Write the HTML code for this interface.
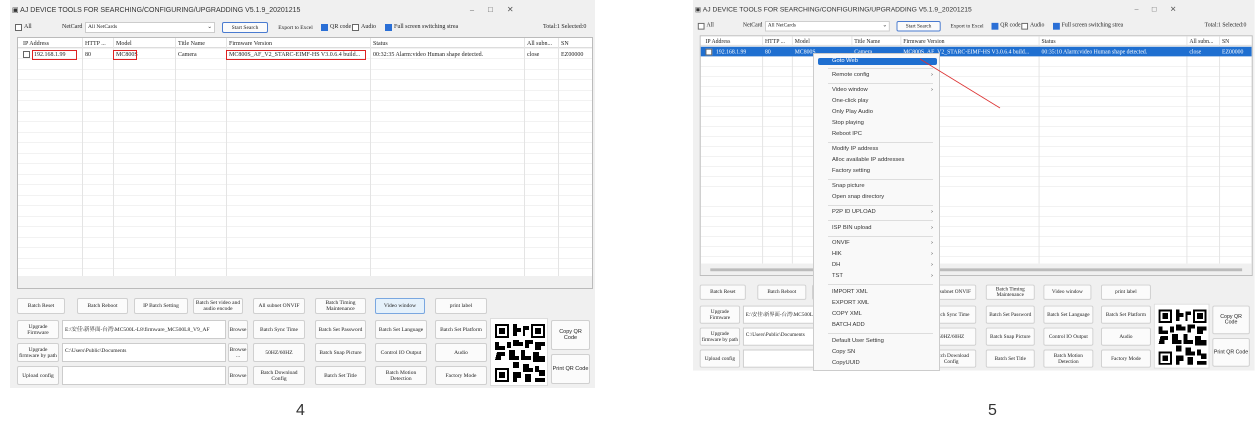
<!DOCTYPE html>
<html><head><meta charset="utf-8"><style>
*{margin:0;padding:0;box-sizing:border-box}
body{width:1260px;height:426px;background:#fff;position:relative;overflow:hidden;font-family:"Liberation Serif","Noto Serif CJK SC",serif;font-size:6px;color:#222}
.win{position:absolute;width:585px;height:388px;background:#f0f0f0;transform-origin:0 0}
.a{position:absolute;white-space:nowrap}
.title{font-family:"Liberation Sans",sans-serif;font-size:7px;color:#333}
.cb{position:absolute;width:7px;height:7px;border:1px solid #666;background:#fff}
.cbc{background:#2a6fd6;border-color:#2a6fd6}
.btn{position:absolute;background:#fbfbfb;border:1px solid #d0d0d0;border-radius:2px;display:flex;align-items:center;justify-content:center;text-align:center;line-height:6px;font-size:5.5px}
.inp{position:absolute;background:#fff;border:1px solid #ccc;font-size:5.5px;padding:4px 2px}
.table{position:absolute;left:7px;top:37px;width:576px;height:252px;background:#fff;border:1px solid #bbb;overflow:hidden;
background-image:repeating-linear-gradient(#fff 0 10px,#e4e4e4 10px 10.5px)}
.col{position:absolute;top:0;bottom:12px;width:1px;background:#e4e4e4}
.red{position:absolute;border:1.5px solid #d22}
.menu{position:absolute;left:813px;top:53px;width:127px;height:318px;background:#f9f9f9;border:1px solid #ccc;font-family:"Liberation Sans",sans-serif;font-size:5.8px;color:#333}
.mi{position:absolute;left:18px}
.ar{position:absolute;left:117px}
.sep{position:absolute;left:14px;right:6px;height:1px;background:#ddd}
</style></head><body>

<!-- LEFT WINDOW -->
<div class="win" style="left:10px;top:0">
 <div class="a title" style="left:2px;top:6px">▣ AJ DEVICE TOOLS FOR SEARCHING/CONFIGURING/UPGRADDING V5.1.9_20201215</div>
 <div class="a" style="left:460px;top:5px;font-size:8px;color:#555">–&nbsp;&nbsp;&nbsp;&nbsp;&nbsp;&nbsp;&nbsp;□&nbsp;&nbsp;&nbsp;&nbsp;&nbsp;&nbsp;&nbsp;✕</div>
 <div class="cb" style="left:5px;top:24px"></div><div class="a" style="left:14px;top:24px">All</div>
 <div class="a" style="left:52px;top:24px">NetCard</div>
 <div class="inp" style="left:75px;top:22px;width:130px;height:11px;padding:1px 2px">All NetCards<span style="float:right">⌄</span></div>
 <div class="btn" style="left:212px;top:22px;width:46px;height:11px;border-color:#4a7bd0">Start Search</div>
 <div class="btn" style="left:263px;top:22px;width:45px;height:11px;border:none;background:none">Export to Excel</div>
 <div class="cb cbc" style="left:311px;top:24px"></div><div class="a" style="left:320px;top:24px">QR code</div>
 <div class="cb" style="left:342px;top:24px"></div><div class="a" style="left:351px;top:24px">Audio</div>
 <div class="cb cbc" style="left:375px;top:24px"></div><div class="a" style="left:384px;top:24px">Full screen switching strea</div>
 <div class="a" style="left:533px;top:24px">Total:1 Selected:0</div>
 <div class="table">
  <div style="position:absolute;left:0;right:0;top:0;height:10px;background:#fff;border-bottom:1px solid #ddd"></div>
  <div class="col" style="left:64px"></div><div class="col" style="left:95px"></div><div class="col" style="left:157px"></div><div class="col" style="left:208px"></div><div class="col" style="left:352px"></div><div class="col" style="left:506px"></div><div class="col" style="left:540px"></div>
  <div class="a" style="left:5px;top:3px">IP Address</div><div class="a" style="left:67px;top:3px">HTTP ...</div><div class="a" style="left:98px;top:3px">Model</div><div class="a" style="left:160px;top:3px">Title Name</div><div class="a" style="left:211px;top:3px">Firmware Version</div><div class="a" style="left:355px;top:3px">Status</div><div class="a" style="left:509px;top:3px">All subn...</div><div class="a" style="left:543px;top:3px">SN</div>
  <div class="cb" style="left:5px;top:13px"></div>
  <div class="a" style="left:16px;top:14px">192.168.1.99</div><div class="a" style="left:67px;top:14px">80</div><div class="a" style="left:98px;top:14px">MC800S</div><div class="a" style="left:160px;top:14px">Camera</div><div class="a" style="left:211px;top:14px">MC800S_AF_V2_STARC-EIMF-HS V3.0.6.4 build...</div><div class="a" style="left:355px;top:14px">00:32:35 Alarm:video Human shape detected.</div><div class="a" style="left:509px;top:14px">close</div><div class="a" style="left:543px;top:14px">EZ00000</div>
  <div class="red" style="left:14px;top:12px;width:45px;height:10px"></div>
  <div class="red" style="left:95px;top:12px;width:24px;height:10px"></div>
  <div class="red" style="left:208px;top:12px;width:140px;height:10px"></div>
  <div style="position:absolute;left:0;right:0;bottom:0;height:12px;background:#f0f0f0"></div>
 </div>
 <div class="btn" style="left:7px;top:298px;width:48px;height:16px">Batch Reset</div>
 <div class="btn" style="left:67px;top:298px;width:51px;height:16px">Batch Reboot</div>
 <div class="btn" style="left:124px;top:298px;width:54px;height:16px">IP Batch Setting</div>
 <div class="btn" style="left:183px;top:298px;width:50px;height:16px">Batch Set video and audio encode</div>
 <div class="btn" style="left:243px;top:298px;width:52px;height:16px">All subnet ONVIF</div>
 <div class="btn" style="left:305px;top:298px;width:51px;height:16px">Batch Timing Maintenance</div>
 <div class="btn" style="left:365px;top:298px;width:50px;height:16px;background:#e5f1fb;border-color:#7aa7e0">Video window</div>
 <div class="btn" style="left:425px;top:298px;width:52px;height:16px">print label</div>

 <div class="btn" style="left:7px;top:320px;width:42px;height:19px">Upgrade Firmware</div>
 <div class="inp" style="left:52px;top:320px;width:164px;height:19px;white-space:nowrap;overflow:hidden">E:\安佳\新界面-台湾\MC500L-L8\firmware_MC500L8_V9_AF</div>
 <div class="btn" style="left:218px;top:320px;width:20px;height:19px">Browse</div>
 <div class="btn" style="left:243px;top:320px;width:52px;height:19px">Batch Sync Time</div>
 <div class="btn" style="left:305px;top:320px;width:51px;height:19px">Batch Set Password</div>
 <div class="btn" style="left:365px;top:320px;width:52px;height:19px">Batch Set Language</div>
 <div class="btn" style="left:425px;top:320px;width:52px;height:19px">Batch Set Platform</div>

 <div class="btn" style="left:7px;top:343px;width:42px;height:19px">Upgrade firmware by path</div>
 <div class="inp" style="left:52px;top:343px;width:164px;height:19px">C:\Users\Public\Documents</div>
 <div class="btn" style="left:218px;top:343px;width:20px;height:19px">Browse ...</div>
 <div class="btn" style="left:243px;top:343px;width:52px;height:19px">50HZ/60HZ</div>
 <div class="btn" style="left:305px;top:343px;width:51px;height:19px">Batch Snap Picture</div>
 <div class="btn" style="left:365px;top:343px;width:52px;height:19px">Control IO Output</div>
 <div class="btn" style="left:425px;top:343px;width:52px;height:19px">Audio</div>

 <div class="btn" style="left:7px;top:366px;width:42px;height:19px">Upload config</div>
 <div class="inp" style="left:52px;top:366px;width:164px;height:19px"></div>
 <div class="btn" style="left:218px;top:366px;width:20px;height:19px">Browse</div>
 <div class="btn" style="left:243px;top:366px;width:52px;height:19px">Batch Download Config</div>
 <div class="btn" style="left:305px;top:366px;width:51px;height:19px">Batch Set Title</div>
 <div class="btn" style="left:365px;top:366px;width:52px;height:19px">Batch Motion Detection</div>
 <div class="btn" style="left:425px;top:366px;width:52px;height:19px">Factory Mode</div>

 <div style="position:absolute;left:480px;top:318px;width:58px;height:68px;background:#fff;border:1px solid #ddd">
  <svg width="50" height="58" viewBox="0 0 25 29" style="position:absolute;left:4px;top:5px" shape-rendering="crispEdges">
   <rect x="0" y="0" width="7" height="7" fill="#000"/><rect x="1" y="1" width="5" height="5" fill="#fff"/><rect x="2" y="2" width="3" height="3" fill="#000"/>
   <rect x="18" y="0" width="7" height="7" fill="#000"/><rect x="19" y="1" width="5" height="5" fill="#fff"/><rect x="20" y="2" width="3" height="3" fill="#000"/>
   <rect x="0" y="22" width="7" height="7" fill="#000"/><rect x="1" y="23" width="5" height="5" fill="#fff"/><rect x="2" y="24" width="3" height="3" fill="#000"/>
   <path d="M9 0h2v2h2v2h-2v2h-2zM14 1h3v2h-2v3h-1zM9 8h3v1h2v2h-5zM0 9h2v2h3v2h-5zM6 9h2v3h-2zM15 8h4v2h-2v2h-2zM20 9h5v2h-2v2h-3zM1 14h4v2h-2v2h-3zM7 13h3v3h2v2h-5zM13 13h2v3h3v2h-5zM19 14h3v2h3v3h-6zM9 19h3v3h-3zM14 20h3v2h2v2h-5zM20 21h2v2h3v3h-3v-2h-2zM9 24h4v3h-2v2h-2zM15 25h3v4h-3zM20 27h5v2h-5z" fill="#000"/>
  </svg>
 </div>
 <div class="btn" style="left:541px;top:320px;width:39px;height:30px;font-family:'Liberation Sans',sans-serif">Copy QR Code</div>
 <div class="btn" style="left:541px;top:354px;width:39px;height:30px;font-family:'Liberation Sans',sans-serif">Print QR Code</div>
</div>

<!-- RIGHT WINDOW -->
<div class="win" style="left:693px;top:0;transform:scale(0.96,0.955)">
 <div class="a title" style="left:2px;top:6px">▣ AJ DEVICE TOOLS FOR SEARCHING/CONFIGURING/UPGRADDING V5.1.9_20201215</div>
 <div class="a" style="left:460px;top:5px;font-size:8px;color:#555">–&nbsp;&nbsp;&nbsp;&nbsp;&nbsp;&nbsp;&nbsp;□&nbsp;&nbsp;&nbsp;&nbsp;&nbsp;&nbsp;&nbsp;✕</div>
 <div class="cb" style="left:5px;top:24px"></div><div class="a" style="left:14px;top:24px">All</div>
 <div class="a" style="left:52px;top:24px">NetCard</div>
 <div class="inp" style="left:75px;top:22px;width:130px;height:11px;padding:1px 2px">All NetCards<span style="float:right">⌄</span></div>
 <div class="btn" style="left:212px;top:22px;width:46px;height:11px;border-color:#4a7bd0">Start Search</div>
 <div class="btn" style="left:263px;top:22px;width:45px;height:11px;border:none;background:none">Export to Excel</div>
 <div class="cb cbc" style="left:311px;top:24px"></div><div class="a" style="left:320px;top:24px">QR code</div>
 <div class="cb" style="left:342px;top:24px"></div><div class="a" style="left:351px;top:24px">Audio</div>
 <div class="cb cbc" style="left:375px;top:24px"></div><div class="a" style="left:384px;top:24px">Full screen switching strea</div>
 <div class="a" style="left:533px;top:24px">Total:1 Selected:0</div>
 <div class="table">
  <div style="position:absolute;left:0;right:0;top:0;height:10px;background:#fff;border-bottom:1px solid #ddd"></div>
  <div class="col" style="left:64px"></div><div class="col" style="left:95px"></div><div class="col" style="left:157px"></div><div class="col" style="left:208px"></div><div class="col" style="left:352px"></div><div class="col" style="left:506px"></div><div class="col" style="left:540px"></div>
  <div class="a" style="left:5px;top:3px">IP Address</div><div class="a" style="left:67px;top:3px">HTTP ...</div><div class="a" style="left:98px;top:3px">Model</div><div class="a" style="left:160px;top:3px">Title Name</div><div class="a" style="left:211px;top:3px">Firmware Version</div><div class="a" style="left:355px;top:3px">Status</div><div class="a" style="left:509px;top:3px">All subn...</div><div class="a" style="left:543px;top:3px">SN</div>
  <div style="position:absolute;left:0;right:0;top:11px;height:10px;background:#1f6fd0"></div>
  <div class="cb" style="left:5px;top:13px"></div>
  <div style="color:#fff">
  <div class="a" style="left:16px;top:14px">192.168.1.99</div><div class="a" style="left:67px;top:14px">80</div><div class="a" style="left:98px;top:14px">MC800S</div><div class="a" style="left:160px;top:14px">Camera</div><div class="a" style="left:211px;top:14px">MC800S_AF_V2_STARC-EIMF-HS V3.0.6.4 build...</div><div class="a" style="left:355px;top:14px">00:35:10 Alarm:video Human shape detected.</div><div class="a" style="left:509px;top:14px">close</div><div class="a" style="left:543px;top:14px">EZ00000</div>
  </div>
  <div style="position:absolute;left:0;right:0;bottom:0;height:12px;background:#f0f0f0"></div>
  <div style="position:absolute;left:10px;right:10px;bottom:4px;height:3px;background:#bbb"></div>
 </div>
 <div class="btn" style="left:7px;top:298px;width:48px;height:16px">Batch Reset</div>
 <div class="btn" style="left:67px;top:298px;width:51px;height:16px">Batch Reboot</div>
 <div class="btn" style="left:124px;top:298px;width:54px;height:16px">IP Batch Setting</div>
 <div class="btn" style="left:183px;top:298px;width:50px;height:16px">Batch Set video</div>
 <div class="btn" style="left:243px;top:298px;width:52px;height:16px">All subnet ONVIF</div>
 <div class="btn" style="left:305px;top:298px;width:51px;height:16px">Batch Timing Maintenance</div>
 <div class="btn" style="left:365px;top:298px;width:50px;height:16px">Video window</div>
 <div class="btn" style="left:425px;top:298px;width:52px;height:16px">print label</div>
 <div class="btn" style="left:7px;top:320px;width:42px;height:19px">Upgrade Firmware</div>
 <div class="inp" style="left:52px;top:320px;width:164px;height:19px;white-space:nowrap;overflow:hidden">E:\安佳\新界面-台湾\MC500L-L8\firmware</div>
 <div class="btn" style="left:218px;top:320px;width:20px;height:19px">Browse</div>
 <div class="btn" style="left:243px;top:320px;width:52px;height:19px">Batch Sync Time</div>
 <div class="btn" style="left:305px;top:320px;width:51px;height:19px">Batch Set Password</div>
 <div class="btn" style="left:365px;top:320px;width:52px;height:19px">Batch Set Language</div>
 <div class="btn" style="left:425px;top:320px;width:52px;height:19px">Batch Set Platform</div>
 <div class="btn" style="left:7px;top:343px;width:42px;height:19px">Upgrade firmware by path</div>
 <div class="inp" style="left:52px;top:343px;width:164px;height:19px">C:\Users\Public\Documents</div>
 <div class="btn" style="left:218px;top:343px;width:20px;height:19px">Browse</div>
 <div class="btn" style="left:243px;top:343px;width:52px;height:19px">50HZ/60HZ</div>
 <div class="btn" style="left:305px;top:343px;width:51px;height:19px">Batch Snap Picture</div>
 <div class="btn" style="left:365px;top:343px;width:52px;height:19px">Control IO Output</div>
 <div class="btn" style="left:425px;top:343px;width:52px;height:19px">Audio</div>
 <div class="btn" style="left:7px;top:366px;width:42px;height:19px">Upload config</div>
 <div class="inp" style="left:52px;top:366px;width:164px;height:19px"></div>
 <div class="btn" style="left:218px;top:366px;width:20px;height:19px">Browse</div>
 <div class="btn" style="left:243px;top:366px;width:52px;height:19px">Batch Download Config</div>
 <div class="btn" style="left:305px;top:366px;width:51px;height:19px">Batch Set Title</div>
 <div class="btn" style="left:365px;top:366px;width:52px;height:19px">Batch Motion Detection</div>
 <div class="btn" style="left:425px;top:366px;width:52px;height:19px">Factory Mode</div>
 <div style="position:absolute;left:480px;top:318px;width:58px;height:68px;background:#fff;border:1px solid #ddd">
  <svg width="50" height="58" viewBox="0 0 25 29" style="position:absolute;left:4px;top:5px" shape-rendering="crispEdges">
   <rect x="0" y="0" width="7" height="7" fill="#000"/><rect x="1" y="1" width="5" height="5" fill="#fff"/><rect x="2" y="2" width="3" height="3" fill="#000"/>
   <rect x="18" y="0" width="7" height="7" fill="#000"/><rect x="19" y="1" width="5" height="5" fill="#fff"/><rect x="20" y="2" width="3" height="3" fill="#000"/>
   <rect x="0" y="22" width="7" height="7" fill="#000"/><rect x="1" y="23" width="5" height="5" fill="#fff"/><rect x="2" y="24" width="3" height="3" fill="#000"/>
   <path d="M9 0h2v2h2v2h-2v2h-2zM14 1h3v2h-2v3h-1zM9 8h3v1h2v2h-5zM0 9h2v2h3v2h-5zM6 9h2v3h-2zM15 8h4v2h-2v2h-2zM20 9h5v2h-2v2h-3zM1 14h4v2h-2v2h-3zM7 13h3v3h2v2h-5zM13 13h2v3h3v2h-5zM19 14h3v2h3v3h-6zM9 19h3v3h-3zM14 20h3v2h2v2h-5zM20 21h2v2h3v3h-3v-2h-2zM9 24h4v3h-2v2h-2zM15 25h3v4h-3zM20 27h5v2h-5z" fill="#000"/>
  </svg>
 </div>
 <div class="btn" style="left:541px;top:320px;width:39px;height:30px;font-family:'Liberation Sans',sans-serif">Copy QR Code</div>
 <div class="btn" style="left:541px;top:354px;width:39px;height:30px;font-family:'Liberation Sans',sans-serif">Print QR Code</div>
</div>

<!-- context menu -->
<div class="menu">
 <div style="position:absolute;left:4px;top:4px;width:119px;height:7px;background:#1f6fd0;border-radius:2px"></div>
 <div class="mi" style="top:4px;color:#fff">Goto Web</div>
 <div class="sep" style="top:14px"></div>
 <div class="mi" style="top:18px">Remote config</div><div class="ar" style="top:18px">›</div>
 <div class="sep" style="top:29px"></div>
 <div class="mi" style="top:33px">Video window</div><div class="ar" style="top:33px">›</div>
 <div class="mi" style="top:44px">One-click play</div>
 <div class="mi" style="top:55px">Only Play Audio</div>
 <div class="mi" style="top:66px">Stop playing</div>
 <div class="mi" style="top:77px">Reboot IPC</div>
 <div class="sep" style="top:88px"></div>
 <div class="mi" style="top:92px">Modify IP address</div>
 <div class="mi" style="top:103px">Alloc available IP addresses</div>
 <div class="mi" style="top:114px">Factory setting</div>
 <div class="sep" style="top:125px"></div>
 <div class="mi" style="top:129px">Snap picture</div>
 <div class="mi" style="top:140px">Open snap directory</div>
 <div class="sep" style="top:151px"></div>
 <div class="mi" style="top:155px">P2P ID UPLOAD</div><div class="ar" style="top:155px">›</div>
 <div class="sep" style="top:166px"></div>
 <div class="mi" style="top:171px">ISP BIN upload</div><div class="ar" style="top:171px">›</div>
 <div class="sep" style="top:182px"></div>
 <div class="mi" style="top:186px">ONVIF</div><div class="ar" style="top:186px">›</div>
 <div class="mi" style="top:197px">HIK</div><div class="ar" style="top:197px">›</div>
 <div class="mi" style="top:208px">DH</div><div class="ar" style="top:208px">›</div>
 <div class="mi" style="top:219px">TST</div><div class="ar" style="top:219px">›</div>
 <div class="sep" style="top:230px"></div>
 <div class="mi" style="top:235px">IMPORT XML</div>
 <div class="mi" style="top:246px">EXPORT XML</div>
 <div class="mi" style="top:257px">COPY XML</div>
 <div class="mi" style="top:268px">BATCH ADD</div>
 <div class="sep" style="top:279px"></div>
 <div class="mi" style="top:284px">Default User Setting</div>
 <div class="mi" style="top:295px">Copy SN</div>
 <div class="mi" style="top:306px">CopyUUID</div>
</div>
<svg style="position:absolute;left:0;top:0" width="1260" height="426"><line x1="920" y1="59" x2="1000" y2="108" stroke="#d33" stroke-width="0.8"/></svg>

<div class="a" style="left:296px;top:402px;font-family:'Liberation Sans',sans-serif;font-size:16px;color:#333">4</div>
<div class="a" style="left:988px;top:402px;font-family:'Liberation Sans',sans-serif;font-size:16px;color:#333">5</div>
</body></html>
